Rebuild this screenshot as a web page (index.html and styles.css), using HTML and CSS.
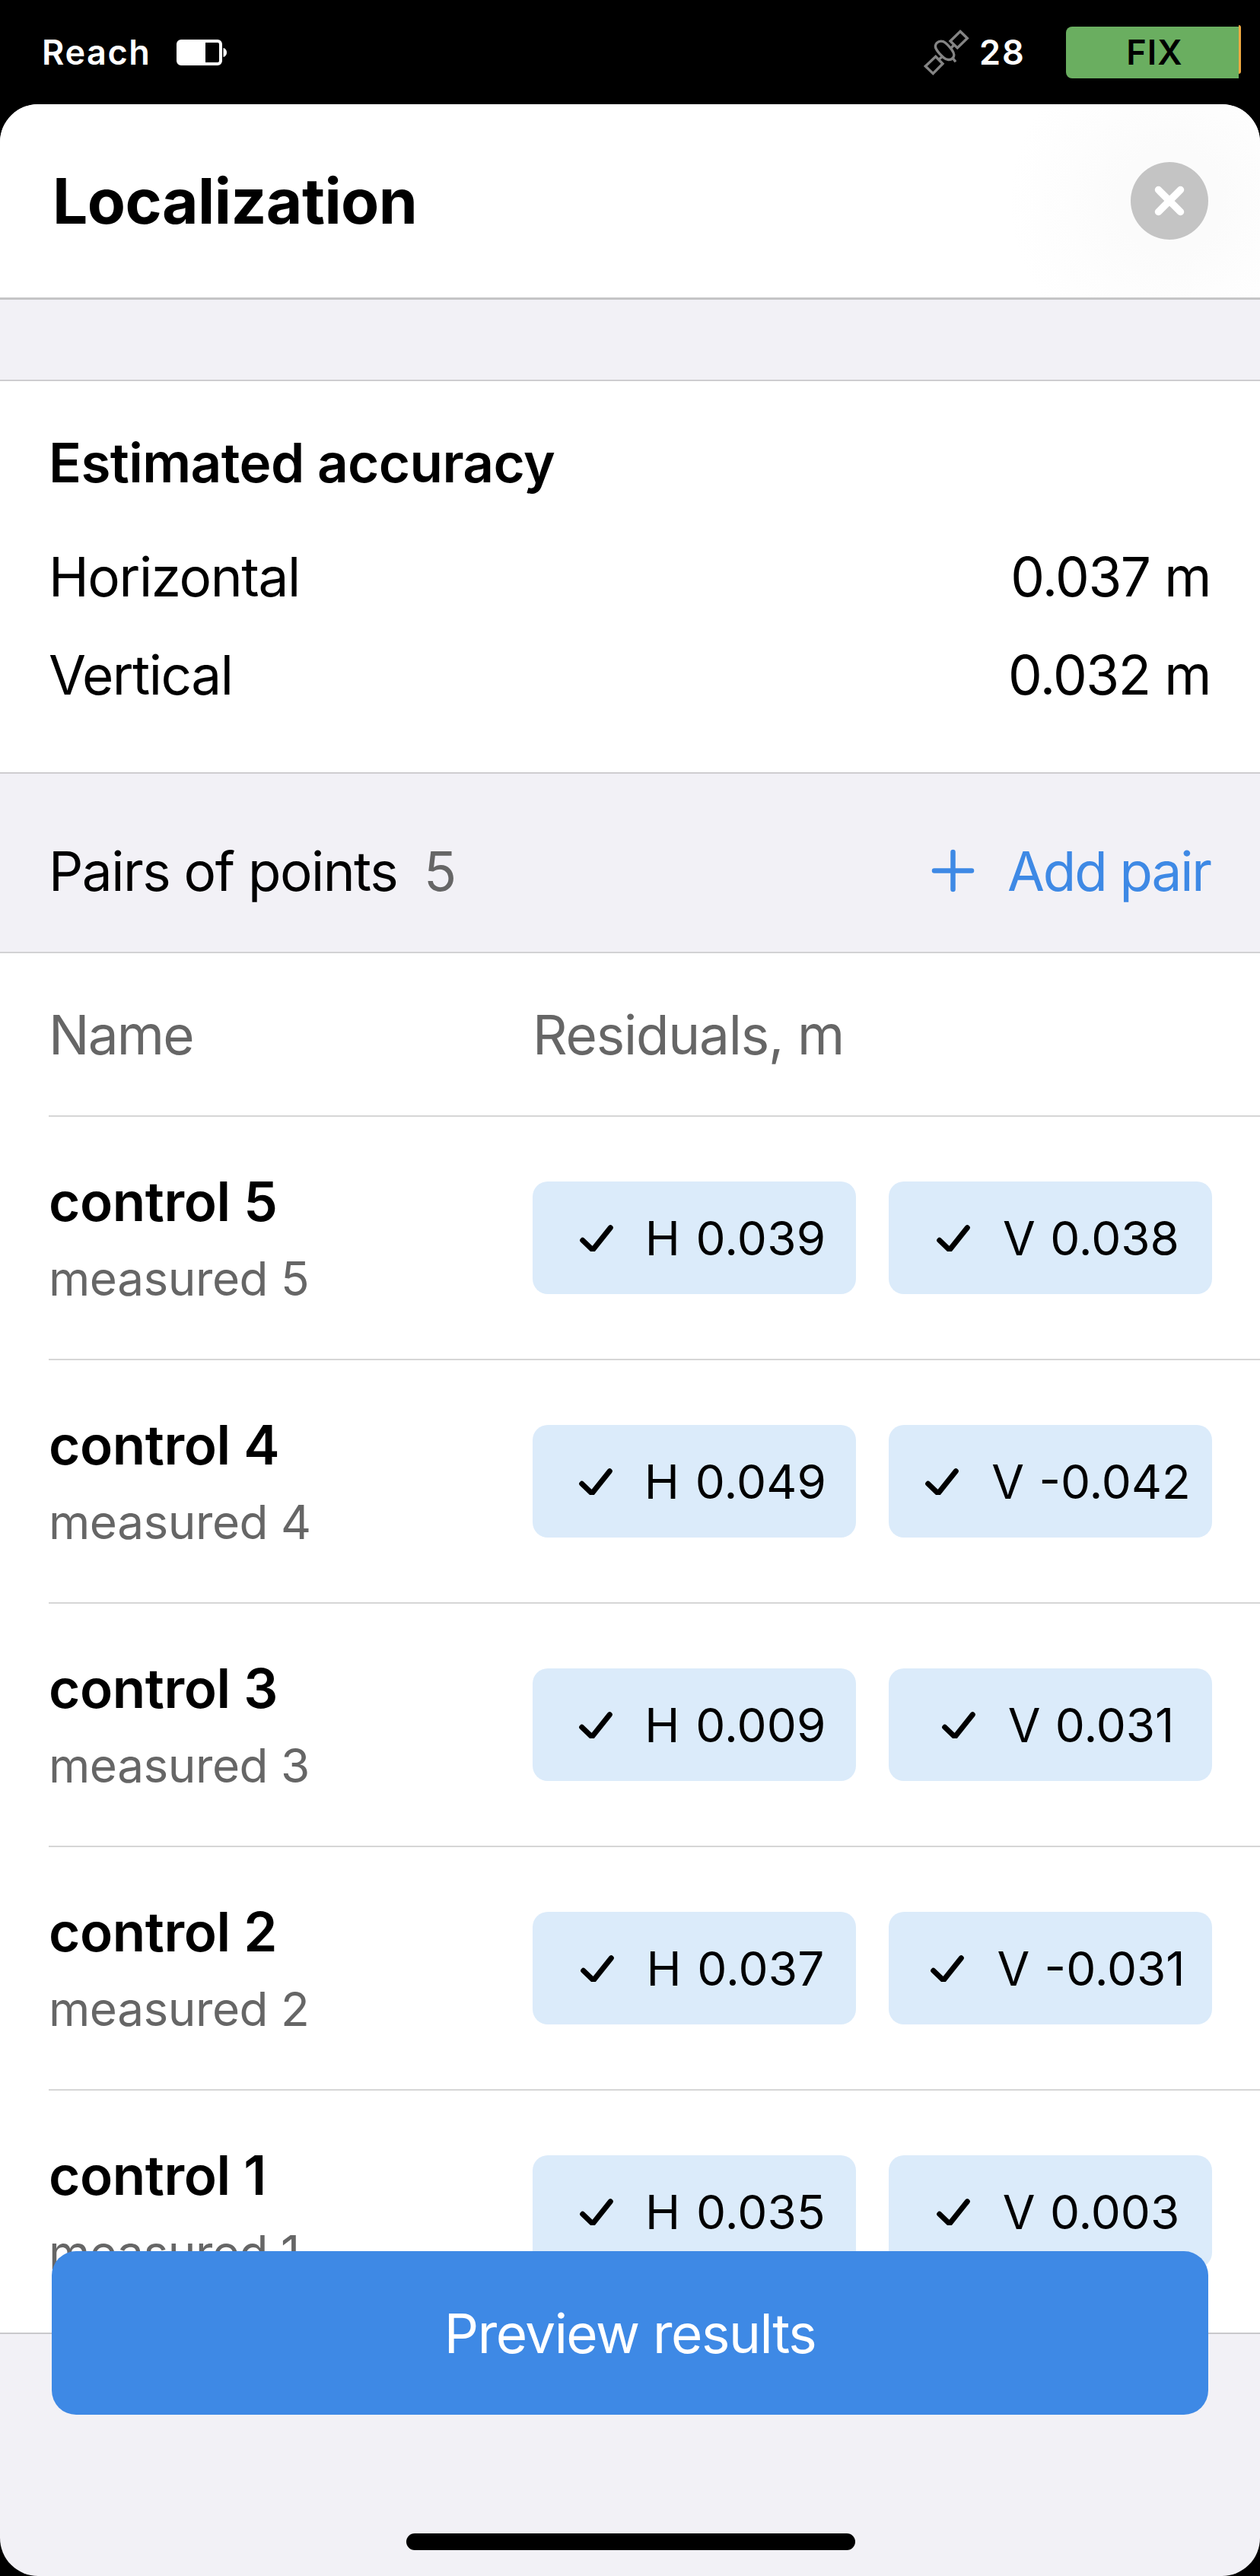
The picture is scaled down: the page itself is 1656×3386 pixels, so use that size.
FILE: index.html
```html
<!DOCTYPE html>
<html lang="en">
<head>
    <meta charset="UTF-8">
    <meta name="viewport" content="width=device-width, initial-scale=1.0">
    <title>Localization</title>
    <link rel="stylesheet" href="styles.css">
</head>
<body>
    <svg width="0" height="0" class="defs">
        <symbol id="check" viewBox="0 0 44 35">
            <path d="M3.7 20.3 L17 33 L40.3 3.7" fill="none" stroke="#000" stroke-width="7" stroke-linecap="round"/>
        </symbol>
    </svg>

    <div class="status-bar">
        <span class="device">Reach</span>
        <svg class="battery" width="66" height="34" viewBox="0 0 66 34">
            <rect x="2" y="2" width="56" height="30" rx="4" fill="none" stroke="#fff" stroke-width="4"/>
            <rect x="2" y="2" width="36" height="30" fill="#fff"/>
            <path d="M61.5 11 C67.5 12 67.5 22 61.5 23 Z" fill="#fff"/>
        </svg>
        <svg class="satellite" width="60" height="60" viewBox="0 0 60 60" fill="none" stroke="#848484" stroke-width="3.4">
            <path d="M48 2.3 L57.3 11.3 L44.3 24 L35 15 Z"/>
            <path d="M15.7 35.3 L25 44.7 L12.3 57.7 L2.3 48 Z"/>
            <path d="M16.5 25.5 C13 19 19 13.5 26 15.7 C30 17.5 34 22.5 37 26.5 C40.5 31.5 41 34.5 38 37.5 C35 40.5 30 40 26.5 37 C22 33 18.5 29.5 16.5 25.5 Z"/>
            <path d="M35.5 24.5 L40 20 M19.5 39.5 L25 35 M37.7 36.7 L42 42.3"/>
        </svg>
        <span class="sat-count">28</span>
        <div class="fix">FIX</div>
        <div class="fix-edge"></div>
    </div>

    <div class="sheet">
        <div class="header">
            <h1>Localization</h1>
            <button class="close" aria-label="Close">
                <svg width="40" height="40" viewBox="0 0 40 40">
                    <path d="M5.5 5.5 L34.5 34.5 M34.5 5.5 L5.5 34.5" stroke="#fff" stroke-width="9.5" stroke-linecap="round"/>
                </svg>
            </button>
        </div>

        <div class="accuracy">
            <h2>Estimated accuracy</h2>
            <div class="line"><span>Horizontal</span><span>0.037 m</span></div>
            <div class="line"><span class="vertical">Vertical</span><span>0.032 m</span></div>
        </div>

        <div class="pairs-bar">
            <span class="pairs-title">Pairs of points</span>
            <span class="pairs-count">5</span>
            <button class="add">
                <svg width="55" height="55" viewBox="0 0 55 55">
                    <path d="M3 27.5 H52 M27.5 3 V52" stroke="#3e89e5" stroke-width="6.5" stroke-linecap="round"/>
                </svg>
                Add pair
            </button>
        </div>

        <div class="table">
            <div class="row head">
                <span class="name-head">Name</span>
                <span class="res-head">Residuals, m</span>
            </div>
            <div class="row">
                <div class="names"><b>control 5</b><span>measured 5</span></div>
                <div class="chip"><svg><use href="#check"/></svg>H 0.039</div>
                <div class="chip v"><svg><use href="#check"/></svg>V 0.038</div>
            </div>
            <div class="row">
                <div class="names"><b>control 4</b><span>measured 4</span></div>
                <div class="chip"><svg><use href="#check"/></svg>H 0.049</div>
                <div class="chip v"><svg><use href="#check"/></svg>V -0.042</div>
            </div>
            <div class="row">
                <div class="names"><b>control 3</b><span>measured 3</span></div>
                <div class="chip"><svg><use href="#check"/></svg>H 0.009</div>
                <div class="chip v"><svg><use href="#check"/></svg>V 0.031</div>
            </div>
            <div class="row">
                <div class="names"><b>control 2</b><span>measured 2</span></div>
                <div class="chip"><svg><use href="#check"/></svg>H 0.037</div>
                <div class="chip v"><svg><use href="#check"/></svg>V -0.031</div>
            </div>
            <div class="row">
                <div class="names"><b>control 1</b><span>measured 1</span></div>
                <div class="chip"><svg><use href="#check"/></svg>H 0.035</div>
                <div class="chip v"><svg><use href="#check"/></svg>V 0.003</div>
            </div>
        </div>

        <!-- floats over the end of the list -->
        <button class="preview">Preview results</button>
        <div class="home-indicator"></div>
    </div>
</body>
</html>
```
FILE: styles.css
```css
* {
    box-sizing: border-box;
}
body {
    margin: 0;
    width: 1656px;
    height: 3386px;
    overflow: hidden;
    font-family: Inter, "Liberation Sans", sans-serif;
    font-size: 71px;
    background-color: #000;
    color: #000;
}
h1, h2 {
    margin: 0;
}
button {
    border: none;
    padding: 0;
    background: none;
    font-family: inherit;
    font-size: inherit;
    cursor: pointer;
}
svg {
    display: block;
    flex: none;
    overflow: visible;
}
.defs {
    position: absolute;
}

/* status bar */
.status-bar {
    height: 137px;
    padding: 0 25px 0 55px;
    display: flex;
    align-items: center;
    font-size: 45px;
    font-weight: 600;
    line-height: 68px;
    color: #fff;
}
.device {
    width: 177px;
    letter-spacing: 1.6px;
}
.satellite {
    margin-left: auto;
    margin-right: 13px;
}
.sat-count {
    width: 114px;
    letter-spacing: 2px;
}
.fix {
    width: 227px;
    height: 68px;
    padding-left: 6px;
    border-radius: 8px 0 0 8px;
    background-color: #6aae60;
    color: #000;
    text-align: center;
    letter-spacing: 1px;
}
.fix-edge {
    width: 3px;
    height: 64px;
    margin-bottom: 7px;
    border-radius: 0 3px 3px 0;
    background-color: #f0a840;
}

/* sheet */
.sheet {
    position: relative;
    height: 3249px;
    border-radius: 50px;
    background-color: #f2f1f6;
    overflow: hidden;
}
.header {
    height: 257px;
    padding: 0 68px 0 69px;
    display: flex;
    align-items: center;
    justify-content: space-between;
    border-bottom: 3px solid #c5c5c6;
    background: radial-gradient(circle at 1537px 127px, #fbfbfb 68px, #fdfdfd 130px, #fff 210px);
}
.header h1 {
    font-size: 82px;
    font-weight: 700;
    letter-spacing: -0.55px;
}
.close {
    width: 102px;
    height: 102px;
    display: flex;
    align-items: center;
    justify-content: center;
    border-radius: 50%;
    background-color: #c4c4c4;
}

.accuracy {
    margin-top: 105px;
    height: 518px;
    padding: 22px 65px 0 64px;
    border-top: 2px solid #cecdd0;
    border-bottom: 2px solid #cecdd0;
    background-color: #fff;
}
.accuracy h2 {
    margin-bottom: 1px;
    font-size: 71px;
    font-weight: 600;
    line-height: 170px;
    letter-spacing: -0.6px;
}
.line {
    display: flex;
    justify-content: space-between;
    line-height: 129px;
    letter-spacing: -1.4px;
}
.line .vertical {
    letter-spacing: -1.5px;
}

.pairs-bar {
    height: 234px;
    padding: 21px 65px 0 64px;
    display: flex;
    align-items: center;
}
.pairs-title {
    width: 493px;
    letter-spacing: -1.5px;
}
.pairs-count {
    color: #666;
}
.add {
    margin-left: auto;
    display: flex;
    align-items: center;
    gap: 44px;
    color: #3e89e5;
    letter-spacing: -2.1px;
}

/* table */
.table {
    height: 1817px;
    padding-left: 64px;
    border-top: 2px solid #d2d2d4;
    border-bottom: 2px solid #c9c9cb;
    background-color: #fff;
}
.row {
    height: 320px;
    display: flex;
    align-items: center;
    border-bottom: 2px solid #d6d6d6;
}
.row:last-child {
    height: 318px;
    border-bottom: none;
}
.head {
    height: 215px;
    color: #666;
}
.name-head {
    width: 633px;
    letter-spacing: -1.8px;
}
.res-head {
    padding-left: 3px;
    letter-spacing: -1.2px;
}
.names {
    width: 636px;
    padding-top: 6px;
    line-height: 102px;
}
.names b {
    display: block;
    font-weight: 600;
    letter-spacing: -0.4px;
}
.names span {
    display: block;
    font-size: 62px;
    letter-spacing: -0.45px;
    color: #666;
}
.chip {
    width: 425px;
    height: 148px;
    padding-left: 22px;
    display: flex;
    align-items: center;
    justify-content: center;
    gap: 42px;
    border-radius: 20px;
    background-color: #dbebfa;
    font-size: 62px;
    letter-spacing: 0.2px;
    word-spacing: 3px;
}
.chip svg {
    width: 44px;
    height: 35px;
}
.chip.v {
    margin-left: 43px;
    padding-left: 20px;
    gap: 43px;
    letter-spacing: 0;
    word-spacing: 2px;
}

.preview {
    position: absolute;
    left: 68px;
    bottom: 212px;
    width: 1520px;
    height: 215px;
    border-radius: 32px;
    background-color: #3e89e5;
    color: #fff;
    letter-spacing: -1.5px;
}
.home-indicator {
    position: absolute;
    left: 534px;
    bottom: 34px;
    width: 590px;
    height: 22px;
    border-radius: 11px;
    background-color: #000;
}
```
